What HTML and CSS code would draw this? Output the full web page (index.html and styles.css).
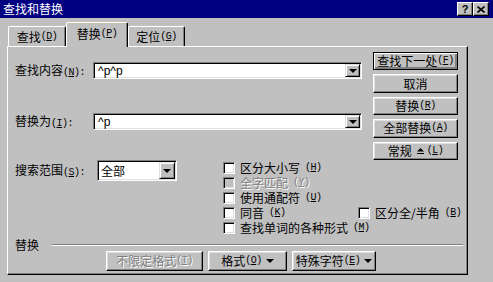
FILE: index.html
```html
<!DOCTYPE html>
<html lang="zh-CN">
<head>
	<meta charset="UTF-8">
	<title>查找和替换</title>
	<link rel="stylesheet" href="styles.css">
</head>
<body>
<div class="dlg">
	<div class="cap">
		<span class="cap-tit">查找和替换</span>
		<span class="cap-btns">
			<b class="cap-b">?</b>
			<b class="cap-b"><svg width="8" height="7" viewBox="0 0 8 7"><path d="M0.5 0.5l7 6M7.5 0.5l-7 6" stroke="#000" stroke-width="1.6"/></svg></b>
		</span>
	</div>

	<ul class="tabs">
		<li class="tab">查找<span class="k">(<u>D</u>)</span></li>
		<li class="tab on">替换<span class="k">(<u>P</u>)</span></li>
		<li class="tab">定位<span class="k">(<u>G</u>)</span></li>
	</ul>

	<div class="panel">
		<div class="fields">
			<div class="row row-find">
				<label class="lab">查找内容<span class="k">(<u>N</u>):</span></label>
				<div class="combo"><span class="combo-val">^p^p</span><i class="drop"></i></div>
			</div>
			<div class="row row-rep">
				<label class="lab">替换为<span class="k">(<u>I</u>):</span></label>
				<div class="combo"><span class="combo-val">^p</span><i class="drop"></i></div>
			</div>
		</div>

		<div class="btns">
			<button class="btn def">查找下一处<span class="k">(<u>F</u>)</span></button>
			<button class="btn">取消</button>
			<button class="btn">替换<span class="k">(<u>R</u>)</span></button>
			<button class="btn">全部替换<span class="k">(<u>A</u>)</span></button>
			<button class="btn">常规 <svg class="more" width="7" height="6" viewBox="0 0 7 6"><path d="M3.5 0L7 3.5H0z"/><rect x="0" y="5" width="7" height="1"/></svg> <span class="k">(<u>L</u>)</span></button>
		</div>

		<div class="opts">
			<div class="scope">
				<label class="lab lab-s">搜索范围<span class="k">(<u>S</u>):</span></label>
				<div class="sel"><span class="sel-val">全部</span><i class="drop drop-big"></i></div>
			</div>
			<ul class="checks">
				<li class="chk"><i class="box"></i>区分大小写<span class="k">(<u>H</u>)</span></li>
				<li class="chk off"><i class="box"></i>全字匹配<span class="k">(<u>Y</u>)</span></li>
				<li class="chk"><i class="box"></i>使用通配符<span class="k">(<u>U</u>)</span></li>
				<li class="chk"><i class="box"></i>同音<span class="k">(<u>K</u>)</span></li>
				<li class="chk"><i class="box"></i>查找单词的各种形式<span class="k">(<u>M</u>)</span></li>
			</ul>
			<ul class="checks checks-2">
				<li class="chk"><i class="box"></i>区分全/半角<span class="k">(<u>B</u>)</span></li>
			</ul>
		</div>

		<div class="rep">
			<div class="rep-head"><span>替换</span><hr class="sep"></div>
			<div class="rep-btns">
				<button class="btn off w1">不限定格式<span class="k">(<u>T</u>)</span></button>
				<button class="btn w2">格式<span class="k">(<u>O</u>)</span> <i class="dn"></i></button>
				<button class="btn w3">特殊字符<span class="k">(<u>E</u>)</span> <i class="dn"></i></button>
			</div>
		</div>
	</div>
</div>
</body>
</html>
```

FILE: styles.css
```css
body,ul,hr{
	margin: 0;
}
ul{
	padding: 0;
	list-style: none;
}
body{
	background-color: #c0c0c0;
	font: 12px/1 "Noto Sans CJK SC", sans-serif;
	color: #000;
}
.k{
	font: 10px/1 "Liberation Mono", monospace;
	letter-spacing: -0.5px;
}
.dlg{
	width: 493px;
	height: 282px;
	overflow: hidden;
}

/* 标题栏 */
.cap{
	height: 18px;
	background-color: #000080;
	color: #fff;
	display: flex;
	align-items: center;
	justify-content: space-between;
	padding: 0 4px 0 3px;
}
.cap-btns{
	display: flex;
}
.cap-b{
	width: 16px;
	height: 14px;
	box-sizing: border-box;
	background-color: #c0c0c0;
	color: #000;
	border: 1px solid;
	border-color: #fff #000 #000 #fff;
	box-shadow: inset -1px -1px #808080;
	display: flex;
	align-items: center;
	justify-content: center;
	font: bold 11px/1 "Liberation Sans", sans-serif;
}

/* 选项卡 */
.tabs{
	display: flex;
	align-items: flex-end;
	height: 24px;
	margin-top: 4px;
	padding-left: 8px;
	position: relative;
	z-index: 1;
}
.tab{
	width: 58px;
	height: 20px;
	box-sizing: border-box;
	border: 1px solid;
	border-color: #fff #000 transparent #fff;
	border-bottom: 0;
	border-radius: 2px 2px 0 0;
	box-shadow: inset -1px 0 #808080;
	display: flex;
	align-items: center;
	justify-content: center;
	padding-top: 1px;
}
.tab.on{
	width: 62px;
	height: 25px;
	margin-bottom: -1px;
	background-color: #c0c0c0;
	padding-bottom: 3px;
}
.tab:last-child{
	width: 57px;
}

/* 面板 */
.panel{
	margin-left: 7px;
	width: 461px;
	height: 229px;
	box-sizing: border-box;
	border: 1px solid;
	border-color: #fff #000 #000 #fff;
	box-shadow: inset -1px -1px #808080;
	padding: 5px 9px 0 7px;
	display: grid;
	grid-template-columns: 1fr 85px;
	grid-template-rows: 108px auto auto;
}
.row{
	display: flex;
	align-items: center;
	margin-right: 11px;
}
.row-find{
	margin-top: 10px;
}
.row-rep{
	margin-top: 34px;
}
.lab{
	width: 78px;
	flex: none;
}
.combo,.sel{
	flex: 1;
	height: 17px;
	box-sizing: border-box;
	background-color: #fff;
	border: 1px solid;
	border-color: #808080 #fff #fff #808080;
	box-shadow: inset 1px 1px #000, inset -1px -1px #dfdfdf;
	display: flex;
	align-items: center;
	padding: 1px 1px 1px 4px;
}
.combo-val,.sel-val{
	flex: 1;
}
.combo-val{
	font: 12px/1 "Liberation Sans", sans-serif;
}
.drop{
	width: 15px;
	height: 13px;
	box-sizing: border-box;
	background-color: #c0c0c0;
	border: 1px solid;
	border-color: #dfdfdf #000 #000 #dfdfdf;
	box-shadow: inset 1px 1px #fff, inset -1px -1px #808080;
	display: flex;
	align-items: center;
	justify-content: center;
}
.drop::after,.dn::after{
	content: "";
	border: solid transparent;
	border-width: 4px 4px 0;
	border-top-color: #000;
}
.drop-big{
	width: 16px;
	height: 17px;
}

/* 按钮 */
.btns{
	display: flex;
	flex-direction: column;
	gap: 4px;
}
.btn{
	height: 20px;
	box-sizing: border-box;
	background-color: #c0c0c0;
	border: 1px solid;
	border-color: #fff #000 #000 #fff;
	box-shadow: inset -1px -1px #808080, inset 1px 1px #dfdfdf;
	font: 12px/1 "Noto Sans CJK SC", sans-serif;
	color: #000;
	padding: 0;
	display: flex;
	align-items: center;
	justify-content: center;
	white-space: nowrap;
}
.btn.def{
	border-color: #000;
	box-shadow: inset 1px 1px #fff, inset -2px -2px #808080;
}
.more{
	margin: 0 3px 0 5px;
}
.btn.off{
	color: #808080;
	text-shadow: 1px 1px #fff;
}

/* 搜索选项 */
.opts{
	grid-column: 1 / -1;
	display: flex;
	align-items: flex-start;
}
.scope{
	flex: none;
	width: 208px;
	display: flex;
	align-items: center;
}
.lab-s{
	width: 82px;
}
.sel{
	flex: none;
	width: 80px;
	height: 21px;
	padding-left: 3px;
}
.checks{
	flex: none;
	width: 135px;
}
.chk{
	height: 15px;
	display: flex;
	align-items: center;
	gap: 5px;
	white-space: nowrap;
}
.box{
	flex: none;
	width: 12px;
	height: 12px;
	box-sizing: border-box;
	background-color: #fff;
	border: 1px solid;
	border-color: #808080 #fff #fff #808080;
	box-shadow: inset 1px 1px #000, inset -1px -1px #dfdfdf;
}
.chk.off{
	color: #808080;
	text-shadow: 1px 1px #fff;
}
.chk.off .box{
	background-color: #c0c0c0;
}
.checks-2{
	margin-top: 45px;
}

/* 替换 */
.rep{
	grid-column: 1 / -1;
}
.rep-head{
	height: 12px;
	display: flex;
	align-items: center;
}
.sep{
	flex: 1;
	margin: 0 -5px 0 13px;
	border: 0;
	border-top: 1px solid #808080;
	border-bottom: 1px solid #fff;
}
.rep-btns{
	display: flex;
	gap: 5px;
	padding-left: 91px;
}
.w1{
	width: 97px;
}
.w2{
	width: 79px;
}
.w3{
	width: 84px;
}
.dn{
	display: inline-flex;
	margin-left: 4px;
}
```
